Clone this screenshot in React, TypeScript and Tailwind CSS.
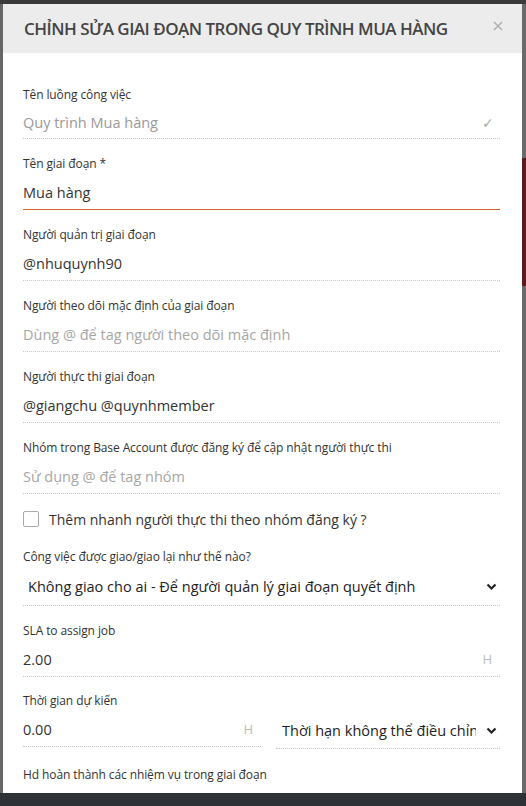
import React from "react";

const font = { fontFamily: '"Open Sans", "Noto Sans", sans-serif' };

type FieldProps = {
  label: string;
  children: React.ReactNode;
  inputClass?: string;
  className?: string;
};

const Field = ({ label, children, inputClass = "h-[34px]", className = "mb-4" }: FieldProps) => (
  <div className={className}>
    <div className="mb-1 text-[12px] leading-[17px] tracking-[-0.1px] text-[#333]">{label}</div>
    <div
      className={`flex items-center border-b border-dotted border-[#c8c8c8] ${inputClass}`}
    >
      {children}
    </div>
  </div>
);

const Chevron = () => (
  <svg width="11" height="8" viewBox="0 0 11 8" className="shrink-0">
    <path d="M1.5 1.5l4 4 4-4" fill="none" stroke="#222" strokeWidth="2.2" />
  </svg>
);

export default function App() {
  return (
    <div className="flex h-[806px] w-[526px] flex-col overflow-hidden bg-[#3a3a3a]" style={font}>
      <div className="flex h-[793px] shrink-0 pt-[4px]">
        <div className="w-[3px] shrink-0 bg-[#666]" />
        <div className="flex w-[519px] shrink-0 flex-col overflow-hidden bg-white">
          {/* header */}
          <div className="flex h-[49px] shrink-0 items-center justify-between bg-[#ececec] pl-[21px] pr-[19px]">
            <h2 className="text-[17px] font-semibold tracking-[-0.5px] text-[#444]">
              CHỈNH SỬA GIAI ĐOẠN TRONG QUY TRÌNH MUA HÀNG
            </h2>
            <svg width="10" height="10" viewBox="0 0 10 10" className="mb-[5px]">
              <path d="M1 1l8 8M9 1l-8 8" stroke="#b0b0b0" strokeWidth="1.5" />
            </svg>
          </div>

          {/* body */}
          <div className="flex flex-col pl-[20px] pr-[22px] pt-[33px] text-[14.5px]">
            <Field label="Tên luồng công việc" inputClass="h-[32px] justify-between">
              <span className="text-[#9a9a9a]">Quy trình Mua hàng</span>
              <span className="mr-[6px] text-[14px] text-[#aaa]">✓</span>
            </Field>

            <div className="mb-4">
              <div className="mb-1 text-[12px] leading-[17px] tracking-[-0.1px] text-[#333]">Tên giai đoạn *</div>
              <div className="flex h-[34px] items-center border-b border-[#d2642a]">
                <span className="text-[#333]">Mua hàng</span>
              </div>
            </div>

            <Field label="Người quản trị giai đoạn">
              <span className="text-[#333]">@nhuquynh90</span>
            </Field>

            <Field label="Người theo dõi mặc định của giai đoạn">
              <span className="text-[#a6a6a6]">Dùng @ để tag người theo dõi mặc định</span>
            </Field>

            <Field label="Người thực thi giai đoạn">
              <span className="text-[#333]">@giangchu @quynhmember</span>
            </Field>

            <Field label="Nhóm trong Base Account được đăng ký để cập nhật người thực thi">
              <span className="text-[#a6a6a6]">Sử dụng @ để tag nhóm</span>
            </Field>

            <label className="mb-[20px] flex h-[18px] items-center gap-[10px]">
              <span className="h-[16px] w-[16px] rounded-[2px] border border-[#aaa] bg-white" />
              <span className="text-[14px] text-[#333]">Thêm nhanh người thực thi theo nhóm đăng ký ?</span>
            </label>

            <Field label="Công việc được giao/giao lại như thế nào?" inputClass="h-[37px] justify-between pl-[5px] pr-[3px]">
              <span className="text-[#222]">Không giao cho ai - Để người quản lý giai đoạn quyết định</span>
              <Chevron />
            </Field>

            <Field label="SLA to assign job" className="mb-[15px]" inputClass="h-[34px] justify-between">
              <span className="text-[#333]">2.00</span>
              <span className="mr-[8px] text-[13px] text-[#bbb]">H</span>
            </Field>

            <div className="mb-[17px]">
              <div className="mb-1 text-[12px] leading-[17px] tracking-[-0.1px] text-[#333]">Thời gian dự kiến</div>
              <div className="grid grid-cols-[238px_1fr] gap-[15px]">
                <div className="flex h-[34px] items-center justify-between border-b border-dotted border-[#c8c8c8]">
                  <span className="text-[#333]">0.00</span>
                  <span className="mr-[8px] text-[13px] text-[#bbb]">H</span>
                </div>
                <div className="flex h-[36px] min-w-0 items-center gap-[10px] border-b border-dotted border-[#c8c8c8] pl-[6px] pr-[3px]">
                  <span className="min-w-0 flex-1 overflow-hidden whitespace-nowrap text-[#222]">Thời hạn không thể điều chỉnh</span>
                  <Chevron />
                </div>
              </div>
            </div>

            <Field label="Hd hoàn thành các nhiệm vụ trong giai đoạn">
              <span className="text-[#a6a6a6]">Giải thích cách hoàn thành giai đoạn</span>
            </Field>
          </div>
        </div>
        <div className="flex w-[4px] shrink-0 flex-col bg-[#6a6a6a]">
          <div className="h-[154px]" />
          <div className="h-[128px] bg-[#5a1c1c]" />
        </div>
      </div>
      <div className="flex-1 bg-[#2e3136]" />
    </div>
  );
}
